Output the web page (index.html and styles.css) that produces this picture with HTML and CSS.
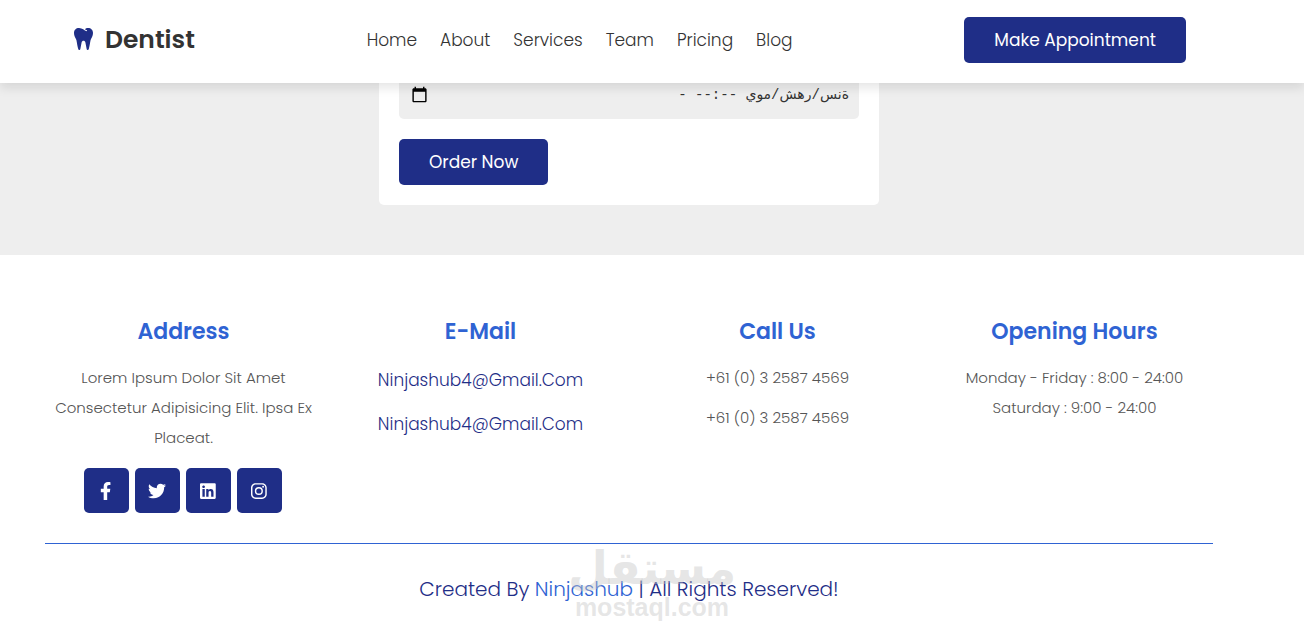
FILE: index.html
```html
<!DOCTYPE html>
<html lang="en">
<head>
<meta charset="utf-8">
<meta name="viewport" content="width=device-width, initial-scale=1">
<title>Dentist</title>
<link rel="stylesheet" href="styles.css">
</head>
<body>
<header class="header">
  <a class="logo" href="#home">
    <svg class="logo-icon" viewBox="0 0 19 22" aria-hidden="true"><path d="M5 0C2 0 0 2 0 5c0 3 1.400 4.500 2.400 7 .6 3 1 6.500 1.900 9.300.4 1 1.700.9 2 0L7.600 14.500c.4-2.300 3.400-2.300 3.800 0l1.300 6.800c.3.9 1.600 1 2 0 .9-2.800 1.300-6.300 1.900-9.300C17.600 9.500 19 8 19 5c0-3-2-5-5-5-1.300 0-2.300.5-3.200 1.200l2.400 1.200-.5.900C10.300 2.500 8.500 0 5 0z"/></svg>
    <span>Dentist</span>
  </a>
  <nav class="nav">
    <a href="#home">Home</a>
    <a href="#about">About</a>
    <a href="#services">Services</a>
    <a href="#team">Team</a>
    <a href="#pricing">Pricing</a>
    <a href="#blog">Blog</a>
  </nav>
  <button class="btn" type="button">Make Appointment</button>
</header>

<main class="booking">
  <form class="card">
    <div class="field">
      <button class="calendar" type="button" aria-label="Open calendar">
        <svg viewBox="0 0 24 24" aria-hidden="true"><path d="M20 3h-1V1h-2v2H7V1H5v2H4c-1.100 0-2 .9-2 2v16c0 1.100.9 2 2 2h16c1.100 0 2-.9 2-2V5c0-1.100-.9-2-2-2zm0 18H4V8h16v13z"/></svg>
      </button>
      <input class="date" type="text" dir="rtl" aria-label="Date and time" value="ةنس/رهش/موي --:-- -">
    </div>
    <button class="btn" type="submit">Order Now</button>
  </form>
</main>

<footer class="footer">
  <div class="columns">
    <section class="column">
      <h3>Address</h3>
      <p>Lorem Ipsum Dolor Sit Amet Consectetur Adipisicing Elit. Ipsa Ex Placeat.</p>
      <div class="share">
        <a href="#" aria-label="Facebook"><svg viewBox="0 0 320 512" aria-hidden="true"><path d="M279.14 288l14.22-92.66h-88.91v-60.13c0-25.35 12.42-50.06 52.24-50.06h40.42V6.26S260.43 0 225.36 0c-73.22 0-121.08 44.38-121.08 124.72v70.62H22.89V288h81.39v224h100.17V288z"/></svg></a>
        <a href="#" aria-label="Twitter"><svg viewBox="0 0 512 512" aria-hidden="true"><path d="M459.37 151.716c.325 4.548.325 9.097.325 13.645 0 138.72-105.583 298.558-298.558 298.558-59.452 0-114.68-17.219-161.137-47.106 8.447.974 16.568 1.299 25.34 1.299 49.055 0 94.213-16.568 130.274-44.832-46.132-.975-84.792-31.188-98.112-72.772 6.498.974 12.995 1.624 19.818 1.624 9.421 0 18.843-1.3 27.614-3.573-48.081-9.747-84.143-51.98-84.143-102.985v-1.299c13.969 7.797 30.214 12.67 47.431 13.319-28.264-18.843-46.781-51.005-46.781-87.391 0-19.492 5.197-37.36 14.294-52.954 51.655 63.675 129.3 105.258 216.365 109.807-1.624-7.797-2.599-15.918-2.599-24.04 0-57.828 46.782-104.934 104.934-104.934 30.213 0 57.502 12.67 76.67 33.137 23.715-4.548 46.456-13.32 66.599-25.34-7.798 24.366-24.366 44.833-46.132 57.827 21.117-2.273 41.584-8.122 60.426-16.243-14.292 20.791-32.161 39.308-52.628 54.253z"/></svg></a>
        <a href="#" aria-label="LinkedIn"><svg viewBox="0 0 448 512" aria-hidden="true"><path d="M416 32H31.9C14.3 32 0 46.5 0 64.3v383.4C0 465.5 14.3 480 31.9 480H416c17.6 0 32-14.5 32-32.3V64.3c0-17.8-14.4-32.3-32-32.3zM135.4 416H69V202.2h66.5V416zm-33.2-243c-21.3 0-38.5-17.3-38.5-38.5S80.900 96 102.200 96c21.200 0 38.500 17.300 38.500 38.500 0 21.300-17.200 38.500-38.500 38.500zm282.100 243h-66.400V312c0-24.800-.5-56.700-34.500-56.700-34.600 0-39.900 27-39.900 54.900V416h-66.400V202.200h63.700v29.200h.9c8.900-16.800 30.600-34.500 62.900-34.500 67.200 0 79.700 44.300 79.700 101.900V416z"/></svg></a>
        <a href="#" aria-label="Instagram"><svg viewBox="0 0 448 512" aria-hidden="true"><path fill-rule="evenodd" d="M132 32h184c73 0 132 59 132 132v184c0 73-59 132-132 132H132C59 480 0 421 0 348V164C0 91 59 32 132 32zm2 41c-52 0-93 41-93 93v180c0 52 41 93 93 93h180c52 0 93-41 93-93V166c0-52-41-93-93-93zm90 68a115 115 0 1 1 0 230 115 115 0 0 1 0-230zm0 41a74 74 0 1 0 0 148 74 74 0 0 0 0-148zm120-73a27 27 0 1 1 0 54 27 27 0 0 1 0-54z"/></svg></a>
      </div>
    </section>
    <section class="column">
      <h3>E-Mail</h3>
      <a class="link" href="mailto:ninjashub4@gmail.com">Ninjashub4@Gmail.Com</a>
      <a class="link" href="mailto:ninjashub4@gmail.com">Ninjashub4@Gmail.Com</a>
    </section>
    <section class="column">
      <h3>Call Us</h3>
      <p>+61 (0) 3 2587 4569</p>
      <p>+61 (0) 3 2587 4569</p>
    </section>
    <section class="column">
      <h3>Opening Hours</h3>
      <p>Monday - Friday : 8:00 - 24:00<br>Saturday : 9:00 - 24:00</p>
    </section>
  </div>
  <div class="credit">
    Created By <span>Ninjashub</span> | All Rights Reserved!
  </div>
</footer>
<div class="watermark">
  <div class="watermark-ar" lang="ar" dir="rtl">مستقل</div>
  <div class="watermark-en">mostaql.com</div>
</div>
</body>
</html>
```
FILE: styles.css
```css
* {
  box-sizing: border-box;
  margin: 0;
  padding: 0;
}

body {
  position: relative;
  background: #fff;
  color: #1f2e87;
  font-family: Poppins, Inter, sans-serif;
  font-weight: 300;
}

a {
  color: inherit;
  text-decoration: none;
}

.header {
  position: relative;
  z-index: 1;
  display: flex;
  align-items: center;
  justify-content: space-between;
  padding: 17px 118px 20px 74px;
  background: #fff;
  box-shadow: 0 5px 10px rgba(0, 0, 0, 0.1);
}

.logo {
  display: flex;
  align-items: center;
  gap: 12px;
  color: #333;
  font-size: 25px;
  font-weight: 600;
  line-height: 46px;
}

.logo-icon {
  width: 19px;
  height: 24px;
  padding-bottom: 2px;
  fill: #1f2e87;
}

.nav {
  display: flex;
  gap: 23px;
  color: #333;
  font-size: 17px;
}

.btn {
  padding: 0 30px;
  border: 0;
  border-radius: 5px;
  background: #1f2e87;
  color: #fff;
  font-family: inherit;
  font-size: 17px;
  font-weight: 400;
  line-height: 46px;
}

.booking {
  display: flex;
  justify-content: center;
  padding: 0 46px 50px 0;
  background: #eee;
}

.card {
  width: 500px;
  padding: 0 20px 20px;
  border-radius: 0 0 5px 5px;
  background: #fff;
}

.field {
  display: flex;
  justify-content: space-between;
  margin-bottom: 20px;
  padding: 0 10px 14px 12px;
  border-radius: 0 0 5px 5px;
  background: #eee;
}

.calendar {
  display: flex;
  align-items: center;
  border: 0;
  background: none;
}

.calendar svg {
  width: 17px;
  height: 17px;
}

.date {
  width: 220px;
  height: 22px;
  border: 0;
  background: none;
  color: #333;
  font-family: "Liberation Mono", "DejaVu Sans", monospace;
  font-size: 14px;
}

.footer {
  padding: 50px 91px 24px 45px;
  text-align: center;
}

.columns {
  display: grid;
  grid-template-columns: repeat(4, 1fr);
  gap: 20px;
  padding-bottom: 30px;
}

.column h3 {
  padding: 10px 0;
  color: #2f63d3;
  font-size: 22px;
  font-weight: 600;
  line-height: 33px;
}

.column p {
  padding: 5px 0;
  color: #555;
  font-size: 15px;
  line-height: 30px;
}

.link {
  display: block;
  padding: 9px 0;
  font-size: 17px;
  line-height: 26px;
}

.share {
  display: flex;
  justify-content: center;
  gap: 6px;
  padding: 10px 2px 0 0;
}

.share a {
  display: flex;
  align-items: center;
  justify-content: center;
  width: 45px;
  height: 45px;
  border-radius: 5px;
  background: #1f2e87;
}

.share svg {
  height: 18px;
  fill: #fff;
}

.credit {
  padding-top: 30px;
  border-top: 1px solid #2f63d3;
  font-size: 20px;
  line-height: 30px;
}

.credit span {
  color: #2f63d3;
}

.watermark {
  position: absolute;
  right: 0;
  bottom: 0;
  left: 0;
  color: rgba(200, 200, 200, 0.45);
  font-weight: 700;
  text-align: center;
  pointer-events: none;
}

.watermark-ar {
  font-family: "DejaVu Sans", sans-serif;
  font-size: 46px;
  line-height: 52px;
}

.watermark-en {
  padding-bottom: 8px;
  font-family: "Liberation Sans", sans-serif;
  font-size: 25px;
  line-height: 26px;
}
```
